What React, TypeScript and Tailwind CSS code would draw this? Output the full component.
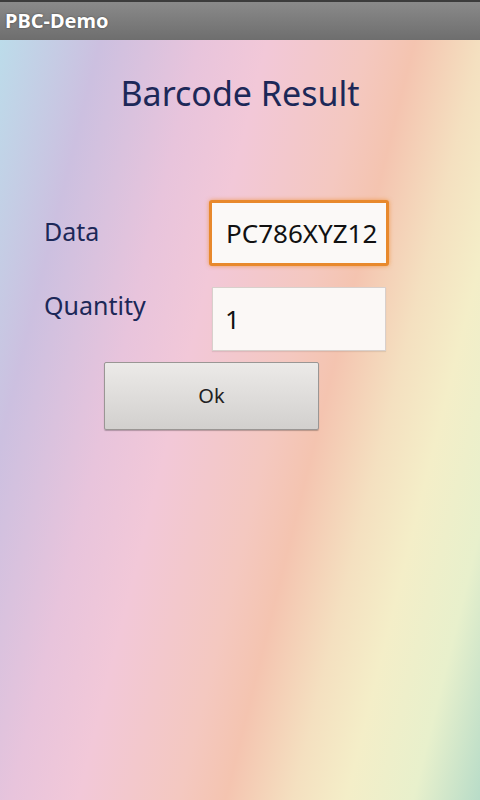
import React from "react";

export default function App() {
  return (
    <div className="w-[480px] h-[800px] flex flex-col overflow-hidden font-['Noto_Sans',sans-serif]">
      {/* Title bar */}
      <div className="h-[40px] shrink-0 flex items-center px-[5px] border-t-[2px] border-[#3c3c3c] bg-gradient-to-b from-[#8a8a8a] to-[#6e6e6e]">
        <span className="text-white font-bold text-[20px] leading-none [text-shadow:0_0_2px_rgba(0,0,0,0.5)]">
          PBC-Demo
        </span>
      </div>

      {/* Content */}
      <div className="flex-1 flex flex-col bg-[linear-gradient(104deg,#bcdcea_0%,#ccc0e0_15%,#e8c4dc_30%,#f2c8d8_40%,#f4c8c0_55%,#f4c4b0_62%,#f4e0c0_72%,#f4eec8_80%,#e8f0cc_90%,#b8dcc8_100%)]">
        <h1 className="mt-[31px] text-center text-[34px] leading-[44px] text-[#1c2858]">
          Barcode Result
        </h1>

        <div className="mt-[85px] flex items-start">
          <span className="ml-[44px] mt-[14px] w-[165px] text-[25px] leading-[34px] text-[#1c2858]">
            Data
          </span>
          <div className="w-[180px] h-[66px] flex items-center px-[14px] bg-[#fbf9f7] border-[3px] border-[#e8892c] rounded-[3px] shadow-[0_0_4px_rgba(240,140,40,0.7)]">
            <span className="text-[26px] text-[#111] leading-none">PC786XYZ12</span>
          </div>
        </div>

        <div className="mt-[21px] flex items-start">
          <span className="ml-[44px] mt-[1px] w-[168px] text-[25px] leading-[34px] text-[#1c2858]">
            Quantity
          </span>
          <div className="w-[174px] h-[64px] flex items-center px-[12px] bg-[#fbf8f6] border border-[#d8d0cc] shadow-[0_1px_1px_rgba(0,0,0,0.08)]">
            <span className="text-[26px] text-[#111] leading-none">1</span>
          </div>
        </div>

        <div className="mt-[11px] ml-[104px]">
          <button className="w-[215px] h-[68px] flex items-center justify-center rounded-[2px] border border-[#9a9694] bg-gradient-to-b from-[#eceae8] to-[#d2d0ce] shadow-[0_1px_1px_rgba(0,0,0,0.25)] text-[20px] text-[#222]">
            Ok
          </button>
        </div>
      </div>
    </div>
  );
}
